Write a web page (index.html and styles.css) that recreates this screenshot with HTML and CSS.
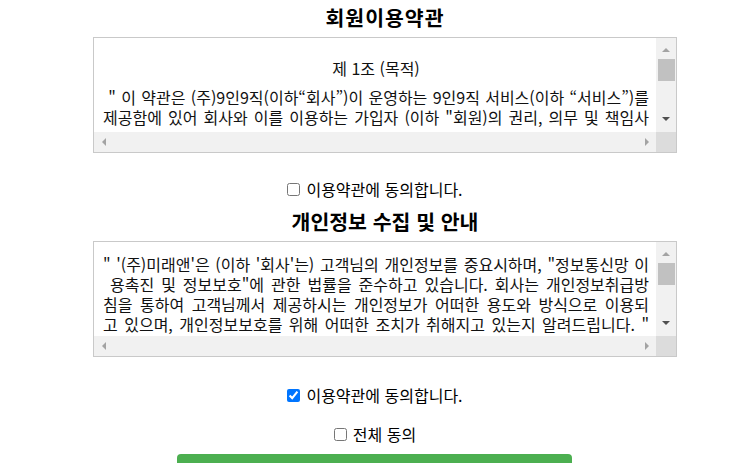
FILE: index.html
```html
<!DOCTYPE html>
<html lang="ko">
<head>
<meta charset="utf-8">
<title>약관 동의</title>
<link rel="stylesheet" href="styles.css">
</head>
<body>
<main class="page">
  <h2 class="title title-1">회원이용약관</h2>
  <div class="box">
    <div class="box-main">
      <div class="box-content box-content-1">
        <p class="article">제 1조 (목적)</p>
        <p class="jline">&nbsp;" 이 약관은 (주)9인9직(이하“회사”)이 운영하는 9인9직 서비스(이하 “서비스”)를</p>
        <p class="jline">제공함에 있어 회사와 이를 이용하는 가입자 (이하 "회원)의 권리, 의무 및 책임사</p>
      </div>
      <div class="vbar">
        <span class="arrow arrow-up dim"></span>
        <span class="vtrack"><span class="vthumb"></span></span>
        <span class="arrow arrow-down"></span>
      </div>
    </div>
    <div class="hbar">
      <span class="arrow arrow-left"></span>
      <span class="htrack"></span>
      <span class="arrow arrow-right dim"></span>
      <span class="corner"></span>
    </div>
  </div>

  <label class="agree agree-1"><input type="checkbox"> 이용약관에 동의합니다.</label>

  <h2 class="title title-2">개인정보 수집 및 안내</h2>
  <div class="box">
    <div class="box-main">
      <div class="box-content box-content-2">
        <p class="jline">" '(주)미래앤'은 (이하 '회사'는) 고객님의 개인정보를 중요시하며, "정보통신망 이</p>
        <p class="jline">&nbsp;용촉진 및 정보보호"에 관한 법률을 준수하고 있습니다. 회사는 개인정보취급방</p>
        <p class="jline">침을 통하여 고객님께서 제공하시는 개인정보가 어떠한 용도와 방식으로 이용되</p>
        <p class="jline">고 있으며, 개인정보보호를 위해 어떠한 조치가 취해지고 있는지 알려드립니다. "</p>
      </div>
      <div class="vbar">
        <span class="arrow arrow-up dim"></span>
        <span class="vtrack"><span class="vthumb"></span></span>
        <span class="arrow arrow-down"></span>
      </div>
    </div>
    <div class="hbar">
      <span class="arrow arrow-left"></span>
      <span class="htrack"></span>
      <span class="arrow arrow-right dim"></span>
      <span class="corner"></span>
    </div>
  </div>

  <label class="agree agree-2"><input type="checkbox" checked> 이용약관에 동의합니다.</label>
  <label class="agree agree-3"><input type="checkbox"> 전체 동의</label>
  <div class="btn-row"><button class="btn" type="button" aria-label="가입하기"></button></div>
</main>
</body>
</html>
```
FILE: styles.css
```css
html, body {
  margin: 0;
  padding: 0;
  background: #fff;
}
body {
  font-family: "Noto Sans CJK KR", "Noto Sans", sans-serif;
  color: #000;
  overflow: hidden;
}
.page {
  width: 584px;
  margin-left: 93px;
  display: flex;
  flex-direction: column;
}
.title {
  margin: 0;
  text-align: center;
  font-size: 20.5px;
  font-weight: 700;
  line-height: 24px;
}
.title-1 { margin-top: 5px; margin-bottom: 8px; letter-spacing: 1px; }
.title-2 { margin-top: 10px; margin-bottom: 8px; }

.box {
  border: 1px solid #c9c9c9;
  height: 114px;
  display: flex;
  flex-direction: column;
  overflow: hidden;
}
.box-main {
  flex: 1;
  display: flex;
  min-height: 0;
}
.box-content {
  flex: 1;
  overflow: hidden;
  font-size: 16px;
  line-height: 20px;
  padding: 0 7px 0 9px;
  color: #111;
}
.box-content-1 { padding-top: 20px; }
.box-content-2 { padding-top: 12px; }
.box-content p { margin: 0; }
.article {
  text-align: center;
  margin-bottom: 9px !important;
}
.jline {
  text-align: justify;
  text-align-last: justify;
  white-space: nowrap;
}

.vbar {
  width: 20px;
  background: #f1f1f1;
  display: flex;
  flex-direction: column;
}
.vtrack {
  flex: 1;
  padding: 0 1px 0 2px;
}
.vthumb {
  display: block;
  height: 22px;
  background: #c1c1c1;
}
.vbar .arrow { width: 20px; height: 21px; }
.hbar {
  height: 20px;
  background: #f1f1f1;
  display: flex;
}
.hbar .arrow { width: 21px; height: 20px; }
.htrack { flex: 1; }
.corner {
  width: 20px;
  background: #dcdcdc;
}
.arrow {
  flex: none;
  position: relative;
}
.arrow::after {
  content: "";
  position: absolute;
  left: 50%;
  top: 50%;
  width: 0;
  height: 0;
  border-style: solid;
}
.arrow-up::after {
  margin: -1px 0 0 -4px;
  border-width: 0 4px 4px 4px;
  border-color: transparent transparent #505050 transparent;
}
.arrow-down::after {
  margin: -5px 0 0 -4px;
  border-width: 4px 4px 0 4px;
  border-color: #505050 transparent transparent transparent;
}
.arrow-left::after {
  margin: -4px 0 0 -3px;
  border-width: 4px 4px 4px 0;
  border-color: transparent #a3a3a3 transparent transparent;
}
.arrow-right::after {
  margin: -4px 0 0 -1px;
  border-width: 4px 0 4px 4px;
  border-color: transparent transparent transparent #505050;
}
.arrow-up.dim::after { border-bottom-color: #a3a3a3; }
.arrow-right.dim::after { border-left-color: #a3a3a3; }

.agree {
  display: flex;
  justify-content: center;
  align-items: center;
  font-size: 16px;
  line-height: 20px;
  padding-right: 20px;
}
.agree input {
  margin: 0 6px 0 0;
  width: 13px;
  height: 13px;
}
.agree-1 { margin-top: 26px; }
.agree-2 { margin-top: 28px; }
.agree-3 { margin-top: 19px; }

.btn-row {
  display: flex;
  padding-left: 84px;
  margin-top: 10px;
}
.btn {
  width: 395px;
  height: 46px;
  border: none;
  border-radius: 4px;
  background: #4caf50;
}
```
